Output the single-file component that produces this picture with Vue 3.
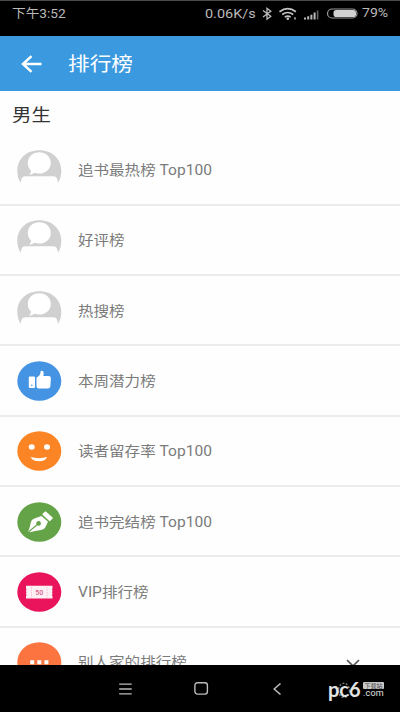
<script setup>
const rows = [
  { icon: 'avatar', text: '追书最热榜 Top100' },
  { icon: 'avatar', text: '好评榜' },
  { icon: 'avatar', text: '热搜榜' },
  { icon: 'thumb', text: '本周潜力榜' },
  { icon: 'smile', text: '读者留存率 Top100' },
  { icon: 'pen', text: '追书完结榜 Top100' },
  { icon: 'ticket', text: 'VIP排行榜' },
  { icon: 'more', text: '别人家的排行榜', expandable: true },
]
</script>

<template>
  <div class="screen">
    <div class="status">
      <span class="wide clock">下午3:52</span>
      <span class="wide speed">0.06K/s</span>
      <svg class="status-icons" width="102" height="16" viewBox="0 0 102 16">
        <path d="M2 4.500 9.800 10.300 6 13.200V2.300L9.800 5.200 2 11" fill="none" stroke="#bbb" stroke-width="1.300" />
        <g fill="none" stroke="#c4c4c4" stroke-width="1.700">
          <path d="M18.500 5.700q8.200-6 16.400 0" />
          <path d="M21.200 8.500q5.500-4 11 0" />
          <path d="M23.800 11.100q2.900-2 5.800 0" />
        </g>
        <circle cx="26.800" cy="12.700" r="1.300" fill="#c4c4c4" />
        <path d="M33 11.200h2v2.300h-2z" fill="#888" />
        <path d="M43 11.500h2v2h-2zM46.200 10.300h2v3.200h-2zM49.400 8.700h2v4.800h-2zM52.600 6.500h2v7h-2z" fill="#b8b8b8" />
        <path d="M55.800 4.500h1.600v9h-1.600z" fill="#666" />
        <rect x="66.500" y="3" width="29.500" height="9" rx="4.500" fill="none" stroke="#999" stroke-width="1.200" />
        <rect x="72.500" y="4" width="22.500" height="7" rx="2.800" fill="#d2d2d2" />
      </svg>
      <span class="wide percent">79%</span>
    </div>

    <header class="bar">
      <svg width="22" height="20" viewBox="0 0 22 20">
        <path d="M20.500 10H2.500M10.500 2.200 2 10l8.500 7.800" fill="none" stroke="#fff" stroke-width="2.500" />
      </svg>
      <h1 class="wide">排行榜</h1>
    </header>

    <main class="content">
      <h2><span class="wide">男生</span></h2>
      <div v-for="row in rows" :key="row.text" class="row">
        <svg class="icon" width="45" height="40" viewBox="0 0 45 40">
          <template v-if="row.icon === 'avatar'">
            <path d="M3.700 33C1.200 29 .3 25 .3 20.500 .3 9 9.500 .3 22.300 .3S44.300 9 44.300 20.500C44.300 25 43.500 29 41 33 40.500 28.500 39.500 26.500 36.500 26.300H8C5.300 26.500 4.200 28.500 3.700 33z" fill="#d0d0d0" />
            <path d="M22.300 2.300c6.500 0 11.500 4.700 11.500 10.600S28.800 23.500 22.300 23.500c-1.800 0-3.500-.3-5-.8-1.500 1.300-3.200 1.800-5.300 1.900 1.500-1.300 2-2.600 2-4.200-2-2-3.200-4.500-3.200-7.500 0-5.900 5-10.600 11.500-10.600z" fill="#fff" />
          </template>
          <template v-else-if="row.icon === 'thumb'">
            <ellipse cx="22.300" cy="20" rx="22" ry="19.800" fill="#4594e4" />
            <rect x="11.800" y="15.500" width="6.200" height="11.500" rx="1" fill="#fff" />
            <circle cx="14.800" cy="24.200" r=".8" fill="#4594e4" />
            <path d="M19.500 16.500q4-2 4-5.500 0-1.300 1.200-1.300 2 0 2 2.300 0 1.500-.5 3h5.400q2.300 0 2.300 2.200l-.5 7.700q-.3 2.500-2.500 2.500h-8.900q-2.500 0-2.500-2.200z" fill="#fff" />
          </template>
          <template v-else-if="row.icon === 'smile'">
            <ellipse cx="22.300" cy="20" rx="22" ry="19.800" fill="#fb8424" />
            <ellipse cx="14.700" cy="16" rx="3" ry="2.800" fill="#fff" />
            <ellipse cx="30" cy="16" rx="3" ry="2.800" fill="#fff" />
            <path d="M13.500 26q8.300 2.300 16.600 0-2 4.300-7.800 4.300-6.500 0-8.800-4.300z" fill="#fff" />
          </template>
          <template v-else-if="row.icon === 'pen'">
            <ellipse cx="22.300" cy="20" rx="22" ry="19.800" fill="#65a348" />
            <path d="M11.300 29.300Q13 25 13.800 20.500 14.500 17.300 18 16.300L24.500 14 31 19.800 28.500 25Q27.500 27.300 24 28 17.500 28.700 13 30.200z" fill="#fff" />
            <path d="M26 12.300 28.500 10 35.200 16 32.700 18.500z" fill="#fff" stroke="#fff" stroke-width="1.200" stroke-linejoin="round" />
            <path d="M12 29.500 21 22" stroke="#65a348" stroke-width="1.100" />
            <circle cx="21.600" cy="21.400" r="2.300" fill="#65a348" />
          </template>
          <template v-else-if="row.icon === 'ticket'">
            <ellipse cx="22.300" cy="20" rx="22" ry="19.800" fill="#e9145b" />
            <path d="M9 13.800h26.500v2.700q-1.300.9 0 1.800v1q-1.300.9 0 1.800v1q-1.300.9 0 1.800v2.700H9v-2.700q1.300-.9 0-1.800v-1q1.300-.9 0-1.800v-1q1.300-.9 0-1.800z" fill="#fdf0f4" />
            <path d="M14.500 15v11M30 15v11" stroke="#f6b5cb" stroke-width=".8" stroke-dasharray="1.500 1" />
            <text x="22.300" y="22.700" class="ticket-text">50</text>
          </template>
          <template v-else>
            <ellipse cx="22.300" cy="20" rx="22" ry="19.800" fill="#fc7440" />
            <path d="M13.200 18.300h4v4h-4zM20.300 18.300h4v4h-4zM27.400 18.300h4v4h-4z" fill="#fff" />
          </template>
        </svg>
        <span class="wide label">{{ row.text }}</span>
        <svg v-if="row.expandable" class="chevron" width="14" height="9" viewBox="0 0 14 9">
          <path d="M1 1l6 6 6-6" fill="none" stroke="#555" stroke-width="1.700" />
        </svg>
      </div>
    </main>

    <nav class="nav">
      <svg width="14" height="12" viewBox="0 0 14 12">
        <path d="M.2 1.200h12.500M.2 6h12.500M.2 10.800h12.500" stroke="#bbb" stroke-width="1.300" />
      </svg>
      <svg class="home" width="15" height="13" viewBox="0 0 15 13">
        <rect x=".9" y=".7" width="12.500" height="11.400" rx="2.500" fill="none" stroke="#bbb" stroke-width="1.400" />
      </svg>
      <svg class="back" width="9" height="12" viewBox="0 0 9 12">
        <path d="M7.500.5 1.200 6l6.300 5.500" fill="none" stroke="#bbb" stroke-width="1.500" />
      </svg>
      <div class="brand">
        <svg class="gear" width="14" height="17" viewBox="0 0 14 17">
          <ellipse cx="7" cy="8.500" rx="5.500" ry="7.200" fill="none" stroke="#777" stroke-width="1.400" stroke-dasharray="2 1.500" />
        </svg>
        <span class="brand-name">pc6</span>
        <div class="brand-side">
          <span class="brand-tag">下载站</span>
          <span class="brand-com">.com</span>
        </div>
      </div>
    </nav>
  </div>
</template>

<style>
body { margin: 0; background: #fff; }
</style>

<style scoped>
.screen {
  width: 400px;
  height: 712px;
  display: flex;
  flex-direction: column;
  overflow: hidden;
  background: #fefefe;
  font-family: Roboto, "Noto Sans CJK SC", sans-serif;
}
.wide { display: block; white-space: nowrap; transform: scaleX(1.11); transform-origin: left center; }
.status {
  box-sizing: border-box;
  height: 36px;
  flex: none;
  display: flex;
  align-items: center;
  padding: 0 0 9px 12px;
  background: #000;
  border-top: 1px solid #4a4a4a;
  color: #b9b9b9;
  font-size: 12px;
  line-height: 16px;
}
.clock { width: 193px; transform: scaleX(1.14); }
.speed { width: 56px; font-size: 13px; }
.status-icons { width: 102px; flex: none; }
.percent { margin: -2px 0 0 -1px; transform: scaleX(1.17); }
.bar {
  height: 55px;
  flex: none;
  display: flex;
  align-items: center;
  padding-left: 21px;
  background: #3b99df;
}
.bar h1 {
  margin: 3px 0 0 24.500px;
  color: #fff;
  font-size: 19.500px;
  line-height: 28px;
  font-weight: 400;
}
.content { flex: 1; min-height: 0; overflow: hidden; }
h2 {
  height: 44.500px;
  margin: 0;
  padding: 11px 0 0 12px;
  box-sizing: border-box;
  font-size: 17.500px;
  line-height: 27px;
  font-weight: 400;
  color: #333;
}
.row {
  box-sizing: border-box;
  height: 70.300px;
  display: flex;
  align-items: center;
  padding: 1px 40px 0 17px;
  border-bottom: 2px solid #ececec;
}
.icon { flex: none; }
.label {
  flex: 1;
  margin-left: 16px;
  font-size: 14px;
  line-height: 20px;
  color: #7b7b7b;
}
.chevron { flex: none; margin-top: 2px; }
.ticket-text { font-size: 7px; font-weight: 500; fill: #d8608a; text-anchor: middle; }
.nav {
  box-sizing: border-box;
  height: 47px;
  flex: none;
  display: flex;
  align-items: center;
  padding: 0 14px 0 119px;
  background: #000;
}
.home { margin-left: 60.500px; }
.back { margin-left: 64.500px; }
.brand {
  position: relative;
  display: flex;
  align-items: center;
  margin-left: 46px;
  color: #e4e4e4;
}
.brand-name {
  width: 35px;
  font-family: Lato, sans-serif;
  font-size: 20px;
  font-weight: 700;
  line-height: 22px;
}
.gear { position: absolute; left: 9px; top: 4px; }
.brand-name, .brand-side { position: relative; }
.brand-side { display: flex; flex-direction: column; width: 21px; margin-top: 1px; }
.brand-tag {
  height: 7px;
  background: #c8c8c8;
  border-radius: 1px;
  color: #444;
  font-size: 6px;
  line-height: 7px;
  text-align: center;
}
.brand-com { font-size: 9px; line-height: 8px; letter-spacing: .2px; }
</style>
